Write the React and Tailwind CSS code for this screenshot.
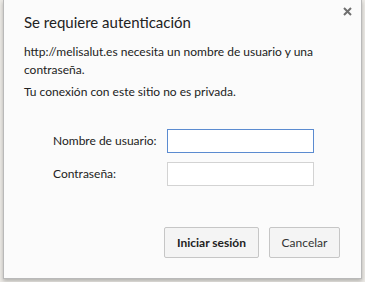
export default function App() {
  return (
    <div className="h-[282px] w-[365px] bg-[#eceae6] pl-[3px] pr-[3px] pb-[3px]" style={{ fontFamily: 'Lato, "Open Sans", sans-serif' }}>
      <div className="flex h-full flex-col border border-t-0 border-[#b9b9b9] bg-[#fbfbfb] shadow-[0_2px_4px_rgba(0,0,0,0.25)]">
        <div className="flex items-start justify-between pl-[20px] pr-[9px] pt-[10px]">
          <h1 className="text-[15px] leading-[24px] text-[#222]">Se requiere autenticación</h1>
          <svg width="9" height="9" viewBox="0 0 9 9" className="mt-[-3px]">
            <path d="M1 1L8 8M8 1L1 8" stroke="#6f6f6f" strokeWidth="2" />
          </svg>
        </div>
        <p className="mt-[9px] pl-[20px] pr-[20px] text-[12px] leading-[18px] text-[#222]">
          http://melisalut.es necesita un nombre de usuario y una contraseña.
        </p>
        <p className="mt-[4px] pl-[20px] text-[12px] leading-[18px] text-[#222]">
          Tu conexión con este sitio no es privada.
        </p>
        <div className="mt-[28px] grid grid-cols-[114px_147px] items-center gap-y-[9px] pl-[49px] text-[12px] text-[#222]">
          <label>Nombre de usuario:</label>
          <input className="h-[24px] border border-[#5b8bd0] bg-white outline-none" />
          <label>Contraseña:</label>
          <input type="password" className="h-[24px] border border-[#d3d3d3] bg-white outline-none" />
        </div>
        <div className="mt-auto mb-[20px] flex justify-end gap-[10px] pr-[21px]">
          <button className="h-[31px] w-[95px] rounded-[2px] border border-[#c6c6c6] bg-[#f4f4f4] text-[12px] font-bold text-[#222]">
            Iniciar sesión
          </button>
          <button className="h-[31px] w-[71px] rounded-[2px] border border-[#c6c6c6] bg-[#f4f4f4] text-[12px] text-[#333]">
            Cancelar
          </button>
        </div>
      </div>
    </div>
  );
}
